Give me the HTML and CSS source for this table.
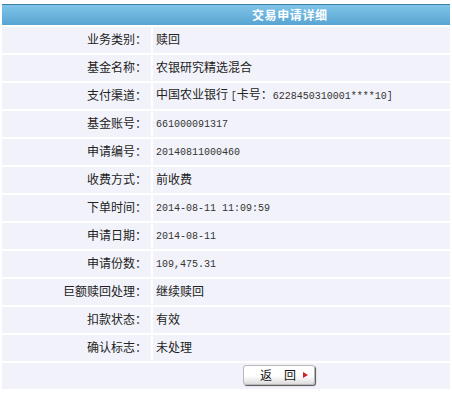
FILE: index.html
```html
<!DOCTYPE html>
<html lang="zh-CN">
<head>
  <meta charset="UTF-8">
  <title>交易申请详细</title>
  <link rel="stylesheet" href="styles.css">
</head>
<body>
  <table class="detail">
    <tr><th colspan="2" class="title">交易申请详细</th></tr>
    <tr><td class="label">业务类别：</td><td class="value">赎回</td></tr>
    <tr><td class="label">基金名称：</td><td class="value">农银研究精选混合</td></tr>
    <tr><td class="label">支付渠道：</td><td class="value">中国农业银行 <span class="num">[</span>卡号：<span class="num">6228450310001****10]</span></td></tr>
    <tr><td class="label">基金账号：</td><td class="value"><span class="num">661000091317</span></td></tr>
    <tr><td class="label">申请编号：</td><td class="value"><span class="num">20140811000460</span></td></tr>
    <tr><td class="label">收费方式：</td><td class="value">前收费</td></tr>
    <tr><td class="label">下单时间：</td><td class="value"><span class="num">2014-08-11 11:09:59</span></td></tr>
    <tr><td class="label">申请日期：</td><td class="value"><span class="num">2014-08-11</span></td></tr>
    <tr><td class="label">申请份数：</td><td class="value"><span class="num">109,475.31</span></td></tr>
    <tr><td class="label">巨额赎回处理：</td><td class="value">继续赎回</td></tr>
    <tr><td class="label">扣款状态：</td><td class="value">有效</td></tr>
    <tr><td class="label">确认标志：</td><td class="value">未处理</td></tr>
    <tr>
      <td colspan="2" class="actions">
        <button type="button" class="back">返&emsp;回<span class="arrow"></span></button>
      </td>
    </tr>
  </table>
</body>
</html>
```

FILE: styles.css
```css
body { margin: 0; background: #fff; font-family: "Noto Sans CJK SC", sans-serif; font-size: 12px; color: #222; }
.detail { width: 452px; margin-top: 2px; border-collapse: separate; border-spacing: 2px; background: #fff; }
.title { height: 20px; padding: 0 0 0 250px; text-align: left; color: #fff; font-size: 12px; font-weight: bold; letter-spacing: 0.6px; line-height: 20px;
  border-top: 1px solid #3f7fa3; background: linear-gradient(#7fc4e9, #58a5d2); }
.detail td { height: 24px; padding: 0 0 2px; line-height: 16px; background: #f2f3fa; }
.label { width: 145px; text-align: right; padding-right: 4px !important; }
.value { padding-left: 3px !important; }
.num { font-family: "Liberation Mono", monospace; font-size: 10px; color: #333; }
.actions { padding-left: 241px !important; }
.back { position: relative; width: 72px; height: 20px; padding: 0 0 0 6px; font-family: "Noto Sans CJK SC", sans-serif; font-size: 12px; color: #111;
  border: 1px solid #b8b8b8; border-radius: 3px; background: linear-gradient(#fff 55%, #dcdcdc); box-shadow: 1px 1px 1px #555; line-height: 16px; text-align: left; text-indent: 10px; }
.arrow { position: absolute; right: 6px; top: 6px; border-left: 5px solid #d21f2a; border-top: 3px solid transparent; border-bottom: 3px solid transparent; }
```
